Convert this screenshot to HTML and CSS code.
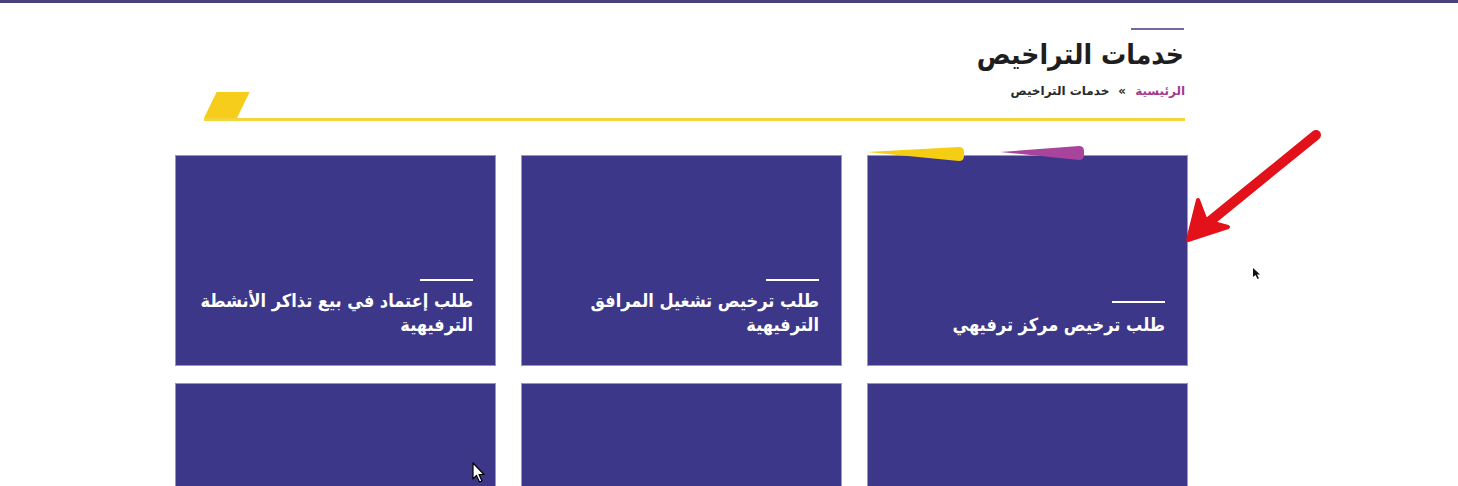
FILE: index.html
```html
<!DOCTYPE html>
<html lang="ar">
<head>
<meta charset="utf-8">
<title>خدمات التراخيص</title>
<link rel="stylesheet" href="styles.css">
</head>
<body>
<div class="topbar"></div>
<main class="page">
  <header class="header" dir="rtl">
    <div class="title-mark"></div>
    <h1 class="title">خدمات التراخيص</h1>
    <div class="crumb-row">
      <nav class="crumbs">
        <a class="crumb-home" href="#">الرئيسية</a>
        <span class="crumb-sep">»</span>
        <span class="crumb-current">خدمات التراخيص</span>
      </nav>
      <span class="rule-tab"></span>
    </div>
  </header>

  <section class="cards" dir="rtl">
    <a class="card card-active" href="#">
      <svg class="card-decor" width="230" height="20" viewBox="0 0 230 20">
        <path d="M0 6 L92 1 Q97 1 97 6 L97 10 Q97 15 92 15 Z" fill="#f5cd12"/>
        <path d="M133 6 L212 0 Q217 0 217 5 L217 9 Q217 14 212 14 Z" fill="#a8449c"/>
      </svg>
      <span class="card-line"></span>
      <span class="card-text">طلب ترخيص مركز ترفيهي</span>
    </a>
    <a class="card" href="#">
      <span class="card-line"></span>
      <span class="card-text">طلب ترخيص تشغيل المرافق<br>الترفيهية</span>
    </a>
    <a class="card" href="#">
      <span class="card-line"></span>
      <span class="card-text">طلب إعتماد في بيع تذاكر الأنشطة<br>الترفيهية</span>
    </a>
    <a class="card" href="#"></a>
    <a class="card" href="#"></a>
    <a class="card" href="#"></a>
  </section>
</main>

<svg class="arrow" width="150" height="130" viewBox="0 0 150 130">
  <path d="M132 10 L14 106" stroke="#e3121a" stroke-width="10" stroke-linecap="round" fill="none"/>
  <path d="M4 115 L14 75 L22 96 L44 102 Z" fill="#e3121a" stroke="#e3121a" stroke-width="4" stroke-linejoin="round"/>
</svg>
<svg class="cursor cursor-small" width="10" height="14" viewBox="0 0 10 14">
  <path d="M1 1 L1 10 L3.5 8 L5.5 12 L7 11.3 L5 7.5 L8 7.5 Z" fill="#111"/>
</svg>
<svg class="cursor cursor-big" width="14" height="22" viewBox="0 0 14 22">
  <path d="M1 1 L1 17 L4.5 13.5 L7.5 20 L10 19 L7 12.5 L12 12.5 Z" fill="#fff" stroke="#000" stroke-width="1.2" stroke-linejoin="round"/>
</svg>
</body>
</html>
```

FILE: styles.css
```css
html, body {
  margin: 0;
  padding: 0;
  background: #ffffff;
  height: 486px;
  overflow: hidden;
}
body {
  position: relative;
  font-family: "DejaVu Sans Condensed", "DejaVu Sans", sans-serif;
}
.topbar {
  height: 3px;
  background: #47417c;
}
.page {
  width: 1012px;
  margin-left: 176px;
  padding-top: 25px;
}
.header {
  padding: 0 3px 0 28px;
}
.title-mark {
  width: 53px;
  height: 2px;
  margin-right: 1px;
  background: #6f6ca0;
}
.title {
  margin: 6px 1px 0 0;
  font-size: 28px;
  line-height: 38px;
  font-weight: bold;
  color: #1e1e1e;
}
.crumb-row {
  margin-top: 8px;
  display: flex;
  justify-content: space-between;
  align-items: flex-start;
  border-bottom: 3px solid #f2d43c;
  height: 36px;
}
.crumbs {
  font-family: "DejaVu Sans", sans-serif;
  font-size: 12px;
  line-height: 18px;
  font-weight: bold;
  display: flex;
  gap: 9px;
}
.crumb-home {
  color: #a23b90;
  text-decoration: none;
}
.crumb-sep, .crumb-current {
  color: #2a2a2a;
}
.rule-tab {
  align-self: flex-end;
  width: 33px;
  height: 26px;
  background: #f5cd1a;
  transform: skewX(-26deg);
  transform-origin: bottom left;
}
.cards {
  margin-top: 34px;
  display: grid;
  grid-template-columns: repeat(3, 321px);
  grid-auto-rows: 211px;
  column-gap: 25px;
  row-gap: 17px;
}
.card {
  position: relative;
  box-sizing: border-box;
  background: #3c3789;
  border: 1px solid #9894c8;
  display: flex;
  flex-direction: column;
  justify-content: flex-end;
  align-items: flex-start;
  padding: 0 22px 28px;
  text-decoration: none;
  color: #ffffff;
}
.card-line {
  width: 53px;
  height: 2px;
  background: #ffffff;
  margin-bottom: 8px;
}
.card-text {
  font-size: 18px;
  line-height: 24px;
  font-weight: bold;
  white-space: nowrap;
}
.card-active .card-line {
  margin-bottom: 10px;
}
.card-decor {
  position: absolute;
  left: -1px;
  top: -10px;
}
.arrow {
  position: absolute;
  left: 1184px;
  top: 125px;
}
.cursor {
  position: absolute;
}
.cursor-small {
  left: 1252px;
  top: 267px;
}
.cursor-big {
  left: 472px;
  top: 462px;
}
```
